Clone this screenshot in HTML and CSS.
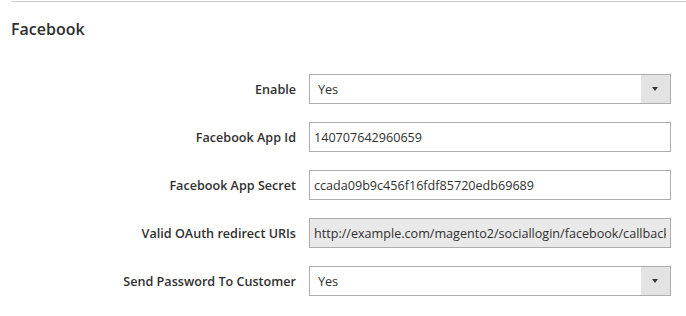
FILE: index.html
```html
<!DOCTYPE html>
<html>

<head>
    <meta charset="utf-8">
    <title>Facebook</title>
    <link rel="stylesheet" href="styles.css">
</head>

<body>
    <div class="section">
        <h2 class="section-title">Facebook</h2>

        <form class="config-form" autocomplete="off">
            <label class="field-label" for="fb-enable">Enable</label>
            <div class="select-wrap">
                <select id="fb-enable" class="field-select">
                    <option>Yes</option>
                    <option>No</option>
                </select>
                <span class="select-arrow"></span>
            </div>

            <label class="field-label" for="fb-app-id">Facebook App Id</label>
            <input id="fb-app-id" class="field-input" type="text" value="140707642960659">

            <label class="field-label" for="fb-app-secret">Facebook App Secret</label>
            <input id="fb-app-secret" class="field-input" type="text" value="ccada09b9c456f16fdf85720edb69689">

            <label class="field-label" for="fb-redirect">Valid OAuth redirect URIs</label>
            <input id="fb-redirect" class="field-input field-input--readonly" type="text" readonly
                value="http://example.com/magento2/sociallogin/facebook/callback">

            <label class="field-label" for="fb-send-pass">Send Password To Customer</label>
            <div class="select-wrap">
                <select id="fb-send-pass" class="field-select">
                    <option>Yes</option>
                    <option>No</option>
                </select>
                <span class="select-arrow"></span>
            </div>
        </form>
    </div>
</body>

</html>
```

FILE: styles.css
```css
:root {
    --text: #303030;
    --border: #adadad;
    --rule: #cccccc;
    --readonly-bg: #e9e9e9;
    --arrow-bg: #e3e3e3;
}

body {
    margin: 0;
    background: #fff;
    font-family: 'Open Sans', sans-serif;
    color: var(--text);
}

.section {
    margin: 1px 0 0 11px;
    border-top: 1px solid var(--rule);
}

.section-title {
    margin: 0;
    padding: 17px 0 0;
    font-size: 16px;
    font-weight: 600;
    line-height: 20px;
}

.config-form {
    display: grid;
    grid-template-columns: 285px 362px;
    grid-auto-rows: 30px;
    column-gap: 13px;
    row-gap: 18px;
    margin-top: 35px;
}

.field-label {
    align-self: center;
    text-align: right;
    font-size: 12.6px;
    font-weight: 600;
}

.field-input,
.field-select {
    box-sizing: border-box;
    width: 100%;
    height: 30px;
    margin: 0;
    border: 1px solid var(--border);
    border-radius: 0;
    background: #fff;
    font-family: inherit;
    font-size: 12.6px;
    color: var(--text);
    outline: none;
}

.field-input {
    padding: 0 4px;
}

.field-input--readonly {
    background: var(--readonly-bg);
}

.select-wrap {
    position: relative;
}

.field-select {
    -webkit-appearance: none;
    appearance: none;
    padding: 0 36px 0 8px;
}

/* grey button with the triangle, sits over the select's right side */
.select-arrow {
    position: absolute;
    top: 1px;
    right: 1px;
    bottom: 1px;
    width: 29px;
    background: var(--arrow-bg);
    pointer-events: none;
}

.select-arrow::after {
    content: "";
    position: absolute;
    left: 11px;
    top: 12px;
    border-left: 3.5px solid transparent;
    border-right: 3.5px solid transparent;
    border-top: 4px solid #41362f;
}
```
